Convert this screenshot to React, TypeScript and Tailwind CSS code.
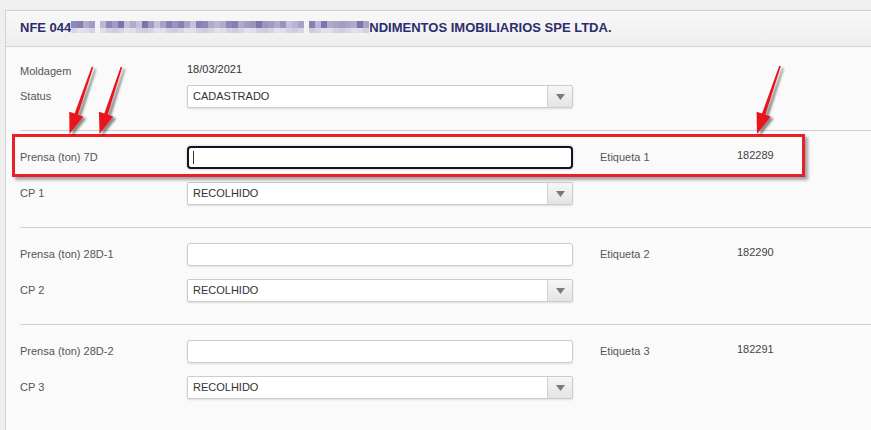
import React from 'react';

type Row = {
  prensa: string;
  cp: string;
  etiqueta: string;
  codigo: string;
  focused?: boolean;
};

const rows: Row[] = [
  { prensa: 'Prensa (ton) 7D', cp: 'CP 1', etiqueta: 'Etiqueta 1', codigo: '182289', focused: true },
  { prensa: 'Prensa (ton) 28D-1', cp: 'CP 2', etiqueta: 'Etiqueta 2', codigo: '182290' },
  { prensa: 'Prensa (ton) 28D-2', cp: 'CP 3', etiqueta: 'Etiqueta 3', codigo: '182291' },
];

const arrows = [
  [92.5, 67, 69.5, 134],
  [121.5, 67, 99.5, 134],
  [780, 66, 757, 134],
];

// pixelated (censored) part of the title
const mosaicTop = [
  'bg-[#8c89b8]',
  'bg-[#a6a3c7]',
  'bg-[#7a76ac]',
  'bg-[#bab6d2]',
  'bg-[#9995bf]',
  'bg-[#b0abca]',
  'bg-[#8581b3]',
  'bg-[#c4c1da]',
  'bg-[#a09cc4]',
];
const mosaicBottom = ['bg-[#d6d4e5]', 'bg-[#dfdeea]', 'bg-[#cecce0]', 'bg-[#e3e2ec]', 'bg-[#d3d1e3]'];
const mosaicBlocks = [4, 34, 10];

const Mosaic = ({ cells, seed }: { cells: number; seed: number }) => (
  <div className="flex">
    {Array.from({ length: cells }).map((_, i) => (
      <div key={i} className="flex w-[6px] flex-col">
        <div className={`h-[7px] ${mosaicTop[(i * 5 + seed * 3 + ((i * i) % 7)) % mosaicTop.length]}`} />
        <div className={`h-[5px] ${mosaicBottom[(i * 3 + seed) % mosaicBottom.length]}`} />
      </div>
    ))}
  </div>
);

// polygon for a tapered arrow from tail (x1,y1) to tip (x2,y2)
const arrowPoints = (x1: number, y1: number, x2: number, y2: number) => {
  const dx = x2 - x1;
  const dy = y2 - y1;
  const len = Math.sqrt(dx * dx + dy * dy);
  const ux = dx / len;
  const uy = dy / len;
  const nx = -uy;
  const ny = ux;
  const headLen = 21;
  const headW = 7.5;
  const tailW = 0.8;
  const baseW = 1.8;
  const bx = x2 - ux * headLen;
  const by = y2 - uy * headLen;
  const pts = [
    [x1 + nx * tailW, y1 + ny * tailW],
    [bx + nx * baseW, by + ny * baseW],
    [bx + nx * headW, by + ny * headW],
    [x2, y2],
    [bx - nx * headW, by - ny * headW],
    [bx - nx * baseW, by - ny * baseW],
    [x1 - nx * tailW, y1 - ny * tailW],
  ];
  return pts.map(p => `${p[0].toFixed(1)},${p[1].toFixed(1)}`).join(' ');
};

const Select = ({ value }: { value: string }) => (
  <div className="flex h-[23px] w-[386px] rounded-[2px] border border-[#cccccc] bg-white shadow-[0_1px_2px_rgba(0,0,0,0.12)]">
    <div className="flex flex-1 items-center pl-[5px] text-[11px] text-[#333333]">{value}</div>
    <div className="flex w-[25px] items-center justify-center border-l border-[#d2d2d2] bg-gradient-to-b from-[#f6f6f6] to-[#e4e4e4]">
      <svg width="9" height="6" viewBox="0 0 9 6">
        <polygon points="0,0 9,0 4.5,6" fill="#7a7a7a" />
      </svg>
    </div>
  </div>
);

const TextInput = ({ focused }: { focused?: boolean }) =>
  focused ? (
    <div className="flex h-[23px] w-[386px] items-center rounded-[4px] border-2 border-[#161616] bg-white pl-[4px] shadow-[0_0_2px_rgba(110,110,220,0.6)]">
      <span className="h-[13px] w-px bg-[#333333]" />
    </div>
  ) : (
    <div className="h-[23px] w-[386px] rounded-[3px] border border-[#cccccc] bg-white shadow-[0_1px_2px_rgba(0,0,0,0.1)]" />
  );

const App = () => {
  return (
    <div className="relative h-[430px] w-[871px] overflow-hidden bg-[#efefef] pl-[5px] pt-[10px] font-['Liberation_Sans',Arial,sans-serif]">
      <div className="min-h-[420px] w-[900px] border-l border-t border-[#d2d2d2] bg-[#fafafa]">
        {/* Header */}
        <div className="flex h-[36px] items-center border-b border-[#d6d6d6] bg-gradient-to-b from-[#f8f8f8] to-[#eeeeee] pb-[2px] pl-[14px] text-[13px] font-bold text-[#2b2d6e]">
          <span>NFE 044</span>
          <div className="mb-[1px] flex gap-[5px]">
            {mosaicBlocks.map((cells, i) => (
              <Mosaic key={i} cells={cells} seed={i} />
            ))}
          </div>
          <span>NDIMENTOS IMOBILIARIOS SPE LTDA.</span>
        </div>

        {/* Moldagem / Status */}
        <div className="flex flex-col gap-[2px] pb-[22px] pl-[14px] pt-[13px]">
          <div className="flex h-[23px]">
            <div className="w-[167px] self-center text-[11px] text-[#555555]">Moldagem</div>
            <div className="self-start pt-[1px] text-[11px] text-[#333333]">18/03/2021</div>
          </div>
          <div className="flex h-[23px] items-center">
            <div className="w-[167px] text-[11px] text-[#555555]">Status</div>
            <Select value="CADASTRADO" />
          </div>
        </div>

        {rows.map(row => (
          <div key={row.cp} className="ml-[14px] flex flex-col gap-[13px] border-t border-[#d0d0d0] pb-[22px] pt-[15px]">
            <div className="flex h-[23px] items-center">
              <div className="w-[167px] text-[11px] text-[#555555]">{row.prensa}</div>
              <TextInput focused={row.focused} />
              <div className="ml-[27px] w-[137px] text-[11px] text-[#555555]">{row.etiqueta}</div>
              <div className="self-start pt-[1px] text-[11px] text-[#444444]">{row.codigo}</div>
            </div>
            <div className="flex h-[23px] items-center">
              <div className="w-[167px] text-[11px] text-[#555555]">{row.cp}</div>
              <Select value="RECOLHIDO" />
            </div>
          </div>
        ))}
      </div>

      {/* Red highlight around the first row */}
      <div className="pointer-events-none absolute left-[12px] top-[134px] h-[43px] w-[793px] border-[3px] border-[#e8202a] shadow-[3px_3px_3px_rgba(0,0,0,0.35)]" />

      {/* Annotation arrows */}
      <svg className="pointer-events-none absolute left-0 top-0" width="871" height="430">
        <defs>
          <filter id="arrowShadow" x="-50%" y="-50%" width="200%" height="200%">
            <feDropShadow dx="3" dy="2" stdDeviation="1.3" floodColor="#000000" floodOpacity="0.45" />
          </filter>
        </defs>
        {arrows.map((a, i) => (
          <polygon key={i} points={arrowPoints(a[0], a[1], a[2], a[3])} fill="#e8191f" filter="url(#arrowShadow)" />
        ))}
      </svg>
    </div>
  );
};

export default App;
